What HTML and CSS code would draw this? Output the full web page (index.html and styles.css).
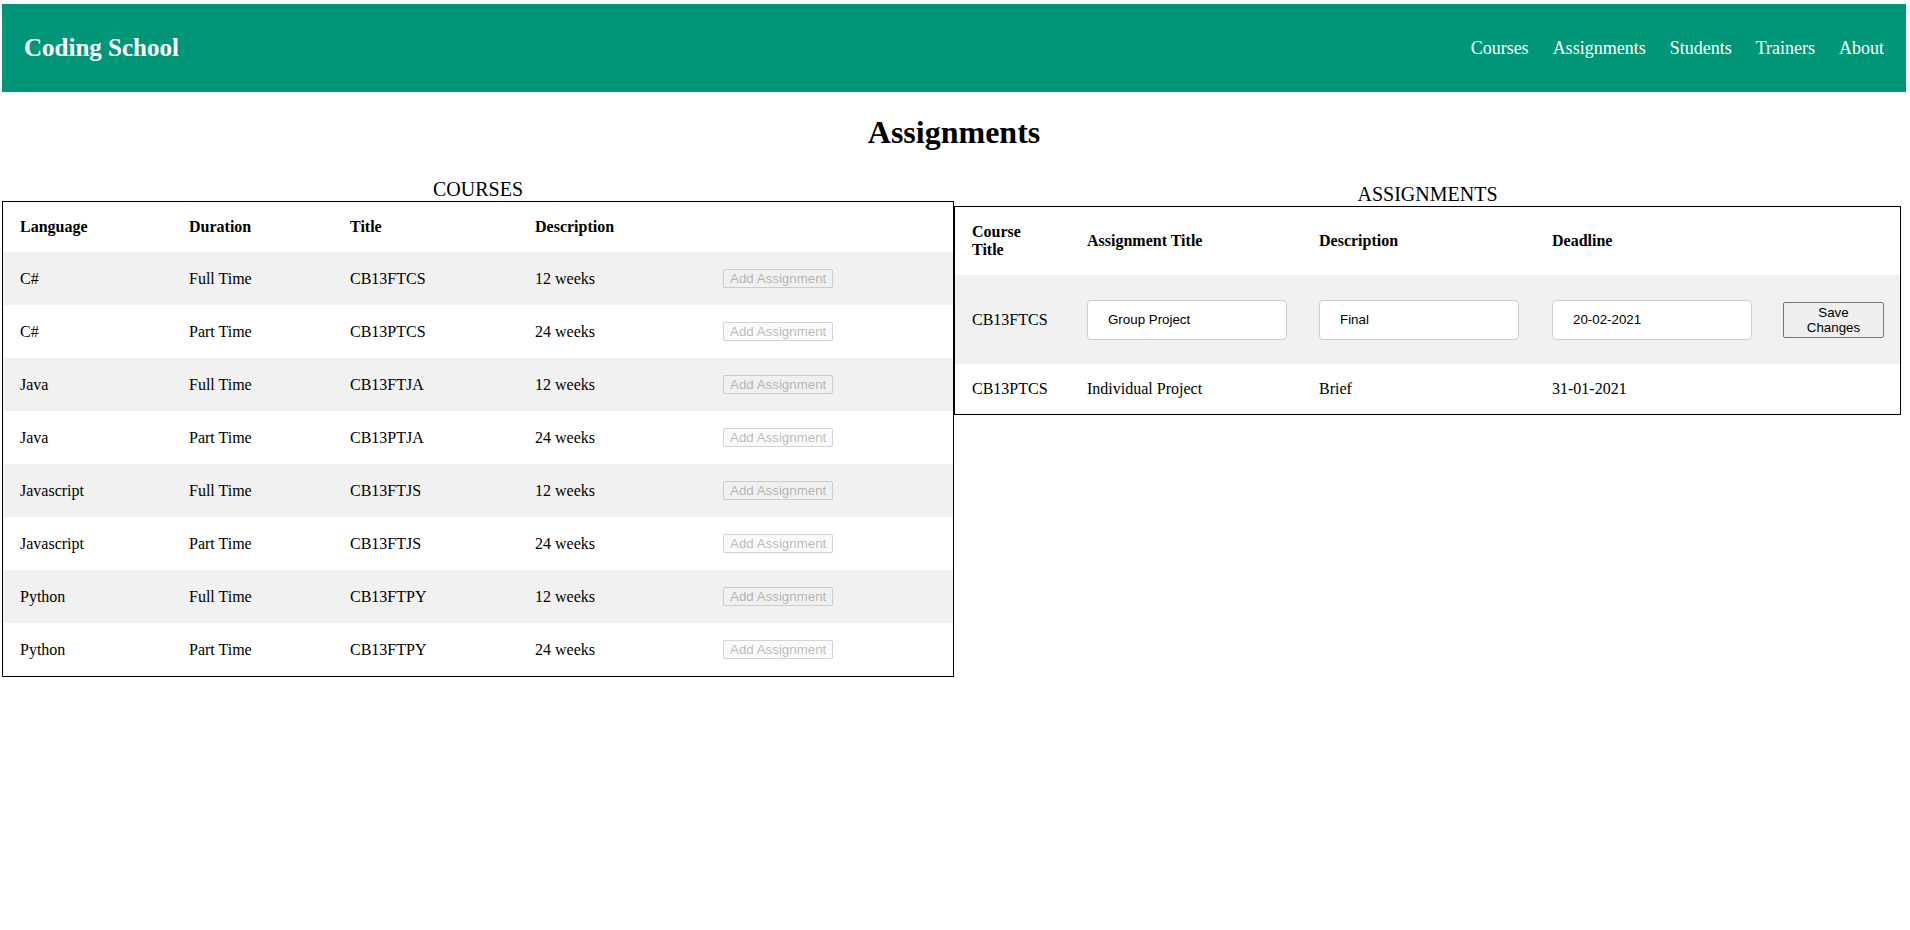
FILE: index.html
```html
<!DOCTYPE html>
<html lang="en">
<head>
<meta charset="utf-8">
<title>Coding School - Assignments</title>
<link rel="stylesheet" href="styles.css">
</head>
<body>
<header class="navbar">
  <div class="brand">Coding School</div>
  <nav class="nav-links">
    <a href="#">Courses</a>
    <a href="#">Assignments</a>
    <a href="#">Students</a>
    <a href="#">Trainers</a>
    <a href="#">About</a>
  </nav>
</header>

<h1 class="page-title">Assignments</h1>

<main class="tables">
  <section class="panel panel-courses">
    <table class="data-table courses">
      <caption>COURSES</caption>
      <colgroup>
        <col class="cc-1"><col class="cc-2"><col class="cc-3"><col class="cc-4"><col class="cc-5">
      </colgroup>
      <thead>
        <tr><th>Language</th><th>Duration</th><th>Title</th><th>Description</th><th></th></tr>
      </thead>
      <tbody>
        <tr><td>C#</td><td>Full Time</td><td>CB13FTCS</td><td>12 weeks</td><td><button class="btn" disabled>Add Assignment</button></td></tr>
        <tr><td>C#</td><td>Part Time</td><td>CB13PTCS</td><td>24 weeks</td><td><button class="btn" disabled>Add Assignment</button></td></tr>
        <tr><td>Java</td><td>Full Time</td><td>CB13FTJA</td><td>12 weeks</td><td><button class="btn" disabled>Add Assignment</button></td></tr>
        <tr><td>Java</td><td>Part Time</td><td>CB13PTJA</td><td>24 weeks</td><td><button class="btn" disabled>Add Assignment</button></td></tr>
        <tr><td>Javascript</td><td>Full Time</td><td>CB13FTJS</td><td>12 weeks</td><td><button class="btn" disabled>Add Assignment</button></td></tr>
        <tr><td>Javascript</td><td>Part Time</td><td>CB13FTJS</td><td>24 weeks</td><td><button class="btn" disabled>Add Assignment</button></td></tr>
        <tr><td>Python</td><td>Full Time</td><td>CB13FTPY</td><td>12 weeks</td><td><button class="btn" disabled>Add Assignment</button></td></tr>
        <tr><td>Python</td><td>Part Time</td><td>CB13FTPY</td><td>24 weeks</td><td><button class="btn" disabled>Add Assignment</button></td></tr>
      </tbody>
    </table>
  </section>

  <section class="panel panel-assignments">
    <table class="data-table assignments">
      <caption>ASSIGNMENTS</caption>
      <colgroup>
        <col class="ac-1"><col class="ac-2"><col class="ac-3"><col class="ac-4"><col class="ac-5">
      </colgroup>
      <thead>
        <tr><th>Course Title</th><th>Assignment Title</th><th>Description</th><th>Deadline</th><th></th></tr>
      </thead>
      <tbody>
        <tr class="edit-row">
          <td>CB13FTCS</td>
          <td><input class="field" type="text" value="Group Project"></td>
          <td><input class="field" type="text" value="Final"></td>
          <td><input class="field" type="text" value="20-02-2021"></td>
          <td><button class="btn btn-save">Save Changes</button></td>
        </tr>
        <tr class="plain-row">
          <td>CB13PTCS</td>
          <td>Individual Project</td>
          <td>Brief</td>
          <td>31-01-2021</td>
          <td></td>
        </tr>
      </tbody>
    </table>
  </section>
</main>
</body>
</html>
```

FILE: styles.css
```css
html, body {
  background: #ffffff;
}

body {
  margin: 4px 4px 0 2px;
  font-family: "Liberation Serif", "Times New Roman", serif;
  font-size: 16px;
  color: #000;
}

/* ---------- Navbar ---------- */
.navbar {
  height: 88px;
  background: #009778;
  display: flex;
  align-items: center;
  justify-content: space-between;
  padding: 0 22px;
}

.brand {
  color: #fff;
  font-weight: bold;
  font-size: 25px;
}

.nav-links {
  display: flex;
  gap: 24px;
}

.nav-links a {
  color: #fff;
  text-decoration: none;
  font-size: 18px;
}

/* ---------- Title ---------- */
.page-title {
  margin: 22px 0 27px;
  font-size: 32px;
  line-height: 37px;
  font-weight: bold;
  text-align: center;
}

/* ---------- Tables ---------- */
.tables {
  display: flex;
  align-items: flex-start;
}

.panel-courses {
  width: 952px;
  flex: none;
}

.panel-assignments {
  width: 947px;
  flex: none;
  margin-top: 5px;
}

.data-table {
  border-collapse: separate;
  border-spacing: 0;
  border: 1px solid #000;
  table-layout: fixed;
}

.data-table caption {
  font-size: 20px;
  line-height: 23px;
}

.courses { width: 952px; }
.assignments { width: 947px; }

.cc-1 { width: 169px; }
.cc-2 { width: 161px; }
.cc-3 { width: 185px; }
.cc-4 { width: 188px; }
.cc-5 { width: 247px; }

.ac-1 { width: 115px; }
.ac-2 { width: 232px; }
.ac-3 { width: 233px; }
.ac-4 { width: 231px; }
.ac-5 { width: 134px; }

.data-table th,
.data-table td {
  padding: 0 17px;
  text-align: left;
  vertical-align: middle;
}

.data-table th {
  font-weight: bold;
  line-height: 18px;
}

.courses th { height: 50px; }
.courses td { height: 53px; }

.courses tbody tr:nth-child(odd) td {
  background: #f1f1f1;
}

.assignments th { height: 68px; }
.assignments .edit-row td {
  height: 89px;
  background: #f1f1f1;
}
.assignments .plain-row td { height: 50px; }

/* ---------- Controls ---------- */
.btn {
  font-family: "Liberation Sans", Arial, sans-serif;
  font-size: 13.333px;
  padding: 1px 6px;
  border: 1px solid #767676;
  border-radius: 2px;
  background: #efefef;
  color: #000;
}

.btn:disabled {
  background: rgba(239, 239, 239, 0.3);
  border-color: rgba(118, 118, 118, 0.3);
  color: rgba(16, 16, 16, 0.3);
}

.btn-save {
  width: 101px;
  line-height: 15px;
  padding: 2px 6px;
}

.field {
  box-sizing: border-box;
  width: 200px;
  height: 40px;
  padding: 0 20px;
  border: 1px solid #cccccc;
  border-radius: 4px;
  font-family: "Liberation Sans", Arial, sans-serif;
  font-size: 13.333px;
  color: #000;
  background: #fff;
}
```
